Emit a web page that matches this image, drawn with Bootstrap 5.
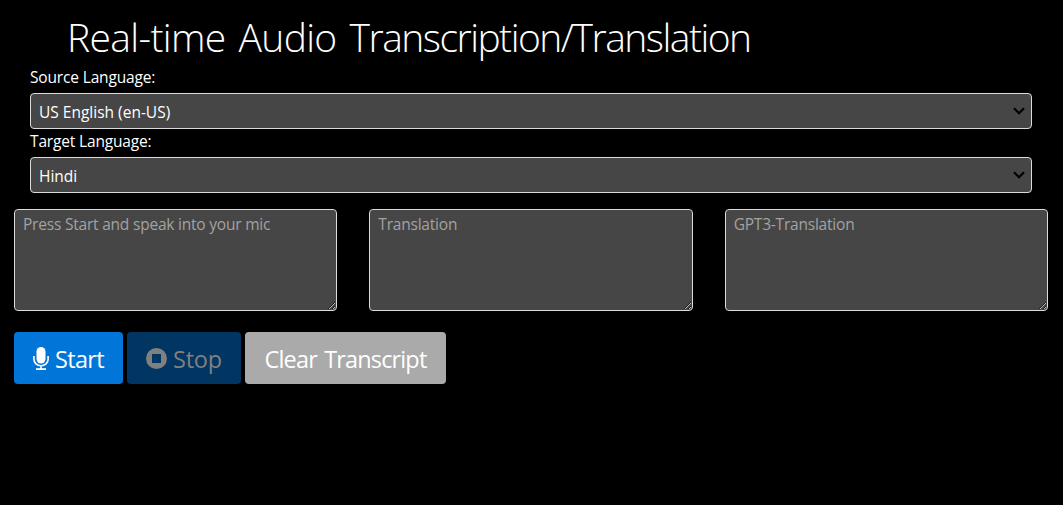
<!DOCTYPE html>
<html lang="en">
<head>
<meta charset="utf-8">
<meta name="viewport" content="width=device-width, initial-scale=1">
<title>Real-time Audio Transcription/Translation</title>
<link href="https://cdn.jsdelivr.net/npm/bootstrap@5.3.0/dist/css/bootstrap.min.css" rel="stylesheet">
<style>
body { background: #000; color: #fff; font-family: "Open Sans", "Noto Sans", sans-serif; font-size: 15.5px; line-height: 22px; }
.page { padding: 13px 15px 0 14px; }
.page-title { font-size: 39px; line-height: 48px; font-weight: 300; letter-spacing: -.65px; word-spacing: 3.5px; margin: 0 0 5px 53px; white-space: nowrap; }
.page-title span { letter-spacing: -1.52px; }
.langs { padding: 0 16px; }
.langs label { display: block; height: 27px; letter-spacing: -.16px; }
.page .form-select, .page .form-control { background-color: #464646; border: 1px solid #dcdcdc; border-radius: 4px; color: #fff; font-size: 15.5px; box-shadow: none; }
.page .form-select { height: 36px; padding: 4px 30px 0 8px; margin-bottom: 1px;
  background-image: url("data:image/svg+xml,%3Csvg xmlns='http://www.w3.org/2000/svg' viewBox='0 0 12 8'%3E%3Cpath d='M1 1.2l5 5 5-5' fill='none' stroke='%23000' stroke-width='2.2'/%3E%3C/svg%3E"); background-size: 12px 8px; background-position: right 6px top 13px; }
.page .form-control { height: 102px; padding: 3px 8px; flex: 1 1 0; width: 0; min-width: 0; resize: both; letter-spacing: -.21px; }
.page .form-control::placeholder { color: #a2a2a2; }
.boxes { gap: 32px; margin-top: 16px; }
.actions { gap: 4px; margin-top: 21px; }
.actions .btn { height: 52px; padding: 3px 0 0; border: 0; border-radius: 4px; font-size: 23.5px; line-height: 1; color: #fff; display: flex; align-items: center; justify-content: center; opacity: 1; white-space: nowrap; letter-spacing: -.85px; word-spacing: 2px; }
.actions svg { flex: none; margin-top: -2px; }
.actions .btn-start { width: 109px; background: #0275d8; gap: 6px; letter-spacing: -.7px; }
.actions .btn-stop { width: 114px; background: #013562; color: #808080; gap: 6px; letter-spacing: -.2px; }
.actions .btn-start svg { margin-top: -3px; }
.actions .btn-clear { width: 201px; background: #aaa; }
</style>
</head>
<body>
<main class="page">
  <h1 class="page-title">Real-time Audio <span>Transcription/Translation</span></h1>
  <div class="langs">
    <label for="source">Source Language:</label>
    <select id="source" class="form-select"><option>US English (en-US)</option></select>
    <label for="target">Target Language:</label>
    <select id="target" class="form-select"><option>Hindi</option></select>
  </div>
  <div class="boxes d-flex">
    <textarea class="form-control" placeholder="Press Start and speak into your mic"></textarea>
    <textarea class="form-control" placeholder="Translation"></textarea>
    <textarea class="form-control" placeholder="GPT3-Translation"></textarea>
  </div>
  <div class="actions d-flex">
    <button class="btn btn-start" type="button">
      <svg width="16" height="23" viewBox="0 0 16 23"><rect x="3.5" y="0" width="9" height="16.5" rx="4.5" fill="#fff"/><path d="M.9 9v3.2a7.1 6.6 0 0 0 14.2 0V9M8 18.8V22" fill="none" stroke="#fff" stroke-width="1.6"/><path d="M3 21.2h10V23H3z" fill="#fff"/></svg>
      <span>Start</span></button>
    <button class="btn btn-stop" type="button" disabled>
      <svg width="21" height="21" viewBox="0 0 21 21"><path fill="#808080" fill-rule="evenodd" d="M10.5 0a10.5 10.5 0 1 1 0 21a10.5 10.5 0 0 1 0-21zM6 6v9h9V6z"/></svg>
      <span>Stop</span></button>
    <button class="btn btn-clear" type="button">Clear Transcript</button>
  </div>
</main>
<script src="https://cdn.jsdelivr.net/npm/bootstrap@5.3.0/dist/js/bootstrap.bundle.min.js"></script>
</body>
</html>
